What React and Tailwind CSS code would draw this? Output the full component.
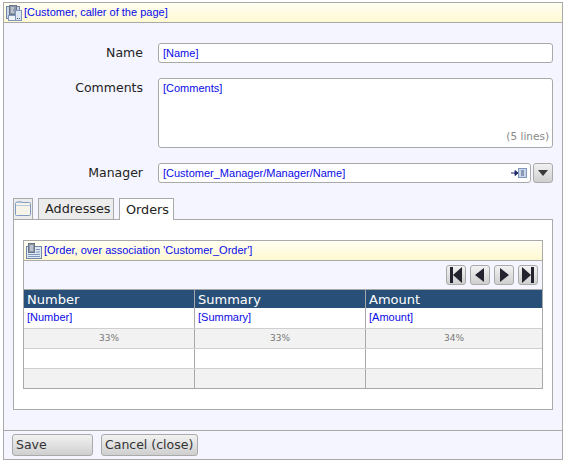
const blue = 'text-[#0a0ae8] text-[11px] font-["Liberation_Sans",sans-serif]'

const EntityIcon = () => (
  <svg width="16" height="16" viewBox="0 0 16 16" className="shrink-0">
    <rect x="0.5" y="1.5" width="13" height="12" fill="#c9d6ea" stroke="#6f86a8" />
    <rect x="3.5" y="0.5" width="7" height="9" fill="#8d98a8" stroke="#6a7484" />
    <path d="M5 3h3M5 5h2M5 7h3" stroke="#e8edf4" />
    <rect x="2.5" y="10.5" width="13" height="5" fill="#eef3fa" stroke="#7e97bb" />
    <rect x="9.5" y="5.5" width="6" height="10" fill="#dbe5f3" stroke="#7e97bb" />
    <path d="M11 13.500h1M13 13.500h1" stroke="#4a5f80" />
  </svg>
)

const ListIcon = () => (
  <svg width="16" height="16" viewBox="0 0 16 16" className="shrink-0">
    <rect x="0.5" y="3.5" width="15" height="12" fill="#dfe8f5" stroke="#6f86a8" />
    <rect x="2.5" y="0.5" width="6" height="9" fill="#8d98a8" stroke="#6a7484" />
    <path d="M4 3h3M4 5h3M4 7h3" stroke="#e8edf4" />
    <path d="M10 6.500h4M10 9h4M2 11.500h12M2 13.500h12" stroke="#7e97bb" />
  </svg>
)

const Field = ({ label, children }) => (
  <div className="flex">
    <div className="w-[140px] pr-[1px] text-right text-[12.5px] leading-[20px] text-[#222]">{label}</div>
    <div className="ml-[14px]">{children}</div>
  </div>
)

const NavButton = ({ d }) => (
  <div className="flex h-[20px] w-[20px] items-center justify-center rounded-[3px] border border-[#aaa] bg-gradient-to-b from-[#f2f2f2] to-[#cfcfcf]">
    <svg width="16" height="16" viewBox="0 0 16 16"><path d={d} fill="#23232f" /></svg>
  </div>
)

const Cell = ({ children, className = 'flex-1' }) => (
  <div className={className}>{children}</div>
)

const Row = ({ bg, children }) => (
  <div className={`flex h-[20px] border-t border-[#cfcfcf] ${bg}`}>{children}</div>
)

const col1 = 'w-[171px] border-r border-[#a9a9a9]'
const col2 = 'w-[171px] border-r border-[#a9a9a9]'
const col3 = 'flex-1'
const pct = 'text-center text-[9px] leading-[19px] text-[#777]'

export default function App() {
  return (
    <div className="h-[463px] w-[567px] overflow-hidden bg-white pl-[3px] pt-[2px] font-['DejaVu_Sans',sans-serif]">
      <div className="flex h-[458px] w-[560px] flex-col border border-[#a9a9a9] bg-[#f4f5ff]">
        {/* Header */}
        <div className="flex h-[20px] items-center gap-[2px] border-b border-[#a9a9a9] bg-gradient-to-b from-[#fffef2] to-[#fff9d2] pl-[2px]">
          <EntityIcon />
          <span className={blue}>[Customer, caller of the page]</span>
        </div>

        {/* Form */}
        <div className="flex flex-col pt-[20px]">
          <Field label="Name">
            <div className={`h-[20px] w-[395px] rounded-[3px] border border-[#a9a9a9] bg-white pl-[4px] leading-[19px] ${blue}`}>[Name]</div>
          </Field>
          <div className="mt-[15px]">
            <Field label="Comments">
              <div className={`relative h-[70px] w-[395px] rounded-[3px] border border-[#a9a9a9] bg-white pl-[4px] leading-[19px] ${blue}`}>
                [Comments]
                <span className="absolute bottom-[1px] right-[3px] font-['DejaVu_Sans',sans-serif] text-[10.5px] text-[#888]">(5 lines)</span>
              </div>
            </Field>
          </div>
          <div className="mt-[15px]">
            <Field label="Manager">
              <div className="flex gap-[2px]">
                <div className={`flex h-[20px] w-[373px] items-center justify-between rounded-[3px] border border-[#a9a9a9] bg-white pl-[4px] pr-[3px] ${blue}`}>
                  <span>[Customer_Manager/Manager/Name]</span>
                  <svg width="16" height="12" viewBox="0 0 16 12">
                    <path d="M0 6h4V3.500L7 6 4 8.500V6" fill="#1f2a6b" stroke="#1f2a6b" />
                    <rect x="7.500" y="1.500" width="8" height="9" fill="#c9d6ea" stroke="#7e97bb" />
                    <path d="M10 4h3M10 6h3M10 8h3" stroke="#4a5f80" />
                  </svg>
                </div>
                <div className="flex h-[20px] w-[20px] items-center justify-center rounded-[3px] border border-[#aaa] bg-gradient-to-b from-[#f2f2f2] to-[#cfcfcf]">
                  <svg width="10" height="6" viewBox="0 0 10 6"><path d="M0 0h10L5 6z" fill="#3a3a3a" /></svg>
                </div>
              </div>
            </Field>
          </div>
        </div>

        {/* Tabs */}
        <div className="mt-[15px] flex items-end gap-[5px] pl-[9px]">
          <div className="flex h-[21px] w-[20px] items-center justify-center border border-b-0 border-[#a9a9a9] bg-[#ececec]">
            <svg width="16" height="16" viewBox="0 0 16 16">
              <rect x="0.500" y="1.500" width="15" height="13" rx="1" fill="#f6f3e8" stroke="#7e9cc4" />
              <path d="M1 4.500h14" stroke="#b9c9df" />
              <path d="M2 0.500h5v1H2z" fill="#dfe7f3" stroke="#a8bcd8" />
            </svg>
          </div>
          <div className="flex h-[21px] w-[76px] items-center border border-b-0 border-[#a9a9a9] bg-[#ececec] pl-[6px] text-[12.8px] text-[#222]">Addresses</div>
          <div className="relative z-10 -mb-[1px] flex h-[22px] w-[55px] items-center border border-b-0 border-[#a9a9a9] bg-white pl-[6px] text-[12.8px] text-[#222]">Orders</div>
        </div>
        <div className="ml-[9px] h-[191px] w-[540px] border border-[#a9a9a9] bg-white px-[9px] pt-[20px]">
          {/* Grid */}
          <div className="flex h-[149px] w-[520px] flex-col border border-[#a9a9a9]">
            <div className="flex h-[20px] items-center gap-[2px] border-b border-[#a9a9a9] bg-gradient-to-b from-[#fffef2] to-[#fff9d2] pl-[2px]">
              <ListIcon />
              <span className={blue}>[Order, over association 'Customer_Order']</span>
            </div>
            <div className="flex h-[28px] items-center justify-end gap-[4px] bg-[#f4f5ff] pr-[4px]">
              <NavButton d="M2 0h3v16H2zM14 0v16L5 8z" />
              <NavButton d="M12 1v14L3 8z" />
              <NavButton d="M4 1v14l9-7z" />
              <NavButton d="M2 0v16l9-8zM11 0h3v16h-3z" />
            </div>
            <div className="flex h-[19px] border-t border-[#a9a9a9] bg-[#284f78] text-[13px] leading-[20px] text-white">
              <Cell className={`${col1} pl-[3px]`}>Number</Cell>
              <Cell className={`${col2} pl-[3px]`}>Summary</Cell>
              <Cell className={`${col3} pl-[3px]`}>Amount</Cell>
            </div>
            <div className="flex h-[20px] bg-white">
              <Cell className={`${col1} pl-[3px] leading-[18px] ${blue}`}>[Number]</Cell>
              <Cell className={`${col2} pl-[3px] leading-[18px] ${blue}`}>[Summary]</Cell>
              <Cell className={`${col3} pl-[3px] leading-[18px] ${blue}`}>[Amount]</Cell>
            </div>
            <Row bg="bg-[#f2f2f2]">
              <Cell className={`${col1} ${pct}`}>33%</Cell>
              <Cell className={`${col2} ${pct}`}>33%</Cell>
              <Cell className={`${col3} ${pct}`}>34%</Cell>
            </Row>
            <Row bg="bg-white"><Cell className={col1} /><Cell className={col2} /><Cell className={col3} /></Row>
            <Row bg="bg-[#f2f2f2]"><Cell className={col1} /><Cell className={col2} /><Cell className={col3} /></Row>
          </div>
        </div>

        {/* Footer */}
        <div className="mt-auto flex h-[29px] items-start gap-[8px] whitespace-nowrap border-t border-[#a9a9a9] pl-[8px] pt-[3px] text-[12.5px] text-[#333]">
          <div className="flex h-[22px] w-[81px] items-center rounded-[3px] border border-[#aaa] bg-gradient-to-b from-[#f2f2f2] to-[#cfcfcf] pl-[3px]">Save</div>
          <div className="flex h-[22px] w-[97px] items-center rounded-[3px] border border-[#aaa] bg-gradient-to-b from-[#f2f2f2] to-[#cfcfcf] pl-[3px]">Cancel (close)</div>
        </div>
      </div>
    </div>
  )
}
